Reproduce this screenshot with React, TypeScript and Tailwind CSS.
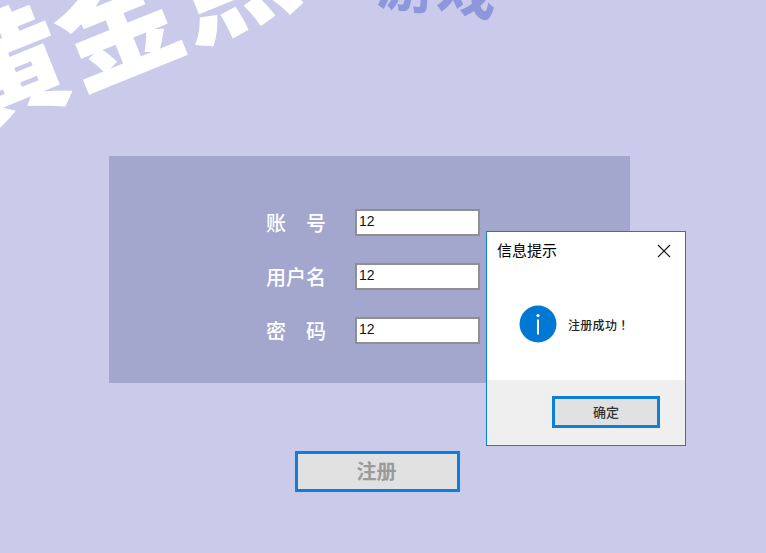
const cjk = "font-['Microsoft_YaHei','Noto_Sans_CJK_SC',sans-serif]";

const fields = [
  { label: "账　号", value: "12" },
  { label: "用户名", value: "12" },
  { label: "密　码", value: "12" },
];

function InfoIcon() {
  return (
    <svg width="38" height="38" viewBox="0 0 38 38">
      <circle cx="19" cy="19" r="18.5" fill="#0078d4" />
      <circle cx="19" cy="10.5" r="1.6" fill="#fff" />
      <rect x="18" y="14.5" width="2" height="15" fill="#fff" />
    </svg>
  );
}

function MessageBox() {
  return (
    <div className="absolute left-[486px] top-[231px] flex h-[215px] w-[200px] flex-col border border-[#0d7fd8] bg-white">
      <div className="flex h-[38px] items-center justify-between pl-[10px] pr-[14px]">
        <span className="-mt-[2px] text-[15px] text-black">信息提示</span>
        <svg width="14" height="14" viewBox="0 0 14 14">
          <path d="M1 1L13 13M13 1L1 13" stroke="#111" strokeWidth="1.1" fill="none" />
        </svg>
      </div>
      <div className="flex h-[110px] items-start pl-[32px] pt-[35px]">
        <InfoIcon />
        <span className="ml-[11px] mt-[11px] text-[12px] font-medium tracking-[0.3px] text-[#222]">
          注册成功<span className="ml-[3px]">！</span>
        </span>
      </div>
      <div className="flex flex-1 items-start justify-end bg-[#efefef] pr-[25px] pt-[16px]">
        <button className="h-[32px] w-[108px] border-[3px] border-[#0d7fd8] bg-[#e1e1e1] text-[13px] font-medium text-[#333]">
          确定
        </button>
      </div>
    </div>
  );
}

export default function App() {
  return (
    <main className={`relative h-[553px] w-[766px] overflow-hidden bg-[#cacbeb] ${cjk}`}>
      {/* banner title, cut off by the top of the window */}
      <div className="relative h-[156px]">
        <span className="absolute left-[-68px] top-[-44px] origin-center rotate-[-22deg] whitespace-nowrap text-[122px] font-black leading-none text-white">
          黄金点
        </span>
        <span className="absolute left-[378px] top-[-46px] rotate-[6deg] whitespace-nowrap text-[60px] font-semibold leading-none text-[#8f97dc]">
          游戏
        </span>
      </div>

      <section className="ml-[109px] flex h-[227px] w-[521px] flex-col gap-[27px] bg-[#a3a7cd] pl-[157px] pt-[53px]">
        {fields.map((f) => (
          <div key={f.label} className="flex h-[27px] items-center">
            <label className="w-[89px] whitespace-pre text-[20px] font-medium leading-none text-white">
              {f.label}
            </label>
            <div className="flex h-[27px] w-[125px] items-center border-2 border-[#8f8f8f] bg-white pl-[2px] font-['Liberation_Sans',sans-serif] text-[14px] text-[#111]">
              <span className="-mt-[2px]">{f.value}</span>
            </div>
          </div>
        ))}
      </section>

      <div className="mt-[68px] flex justify-start pl-[295px]">
        <button className="h-[41px] w-[165px] border-[3px] border-[#0d7fd8] bg-[#e1e1e1] pb-[2px] pr-[2px] text-[20px] font-bold text-[#9a9a9a]">
          注册
        </button>
      </div>

      <MessageBox />
    </main>
  );
}
